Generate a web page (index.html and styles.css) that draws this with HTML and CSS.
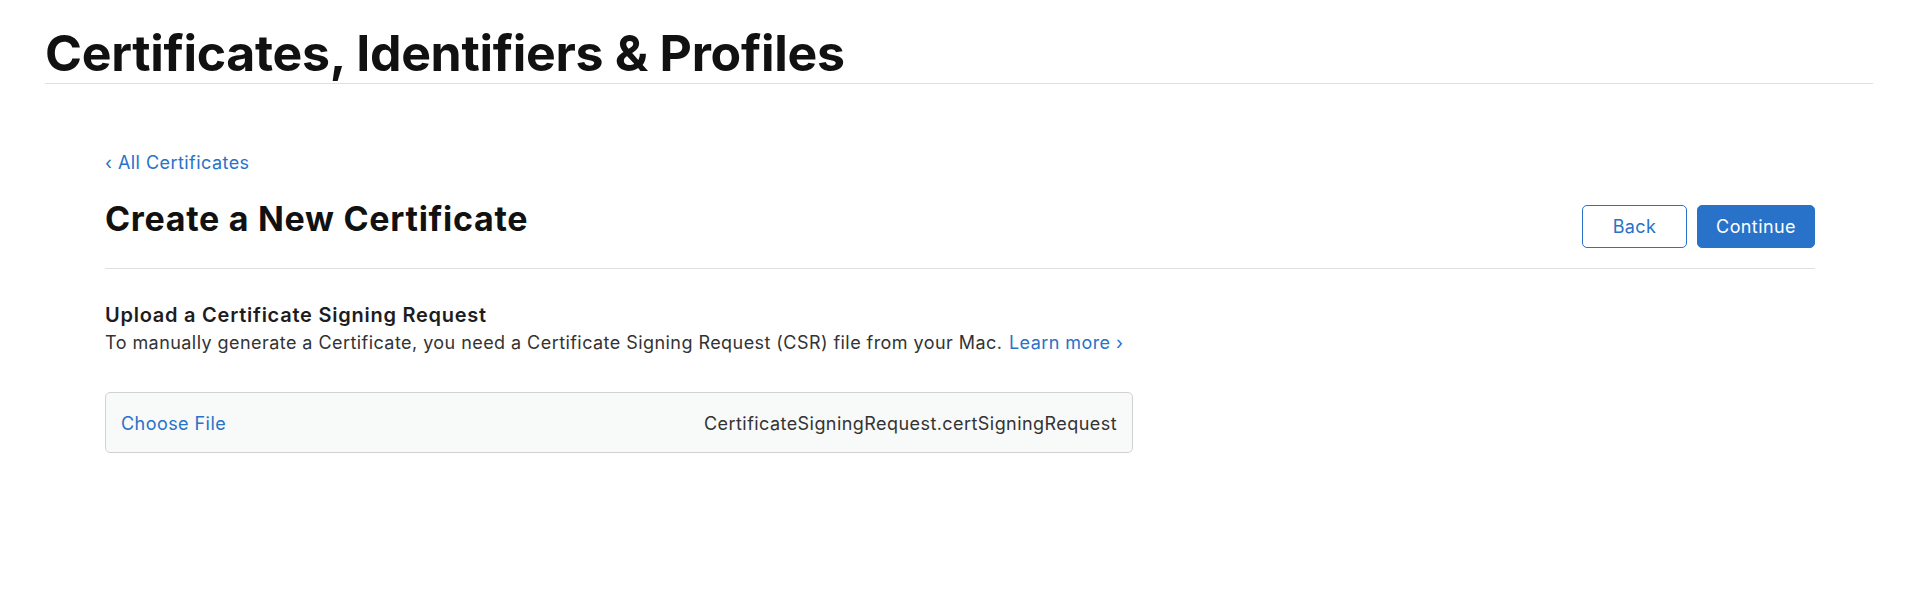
FILE: index.html
```html
<!DOCTYPE html>
<html lang="en">
<head>
<meta charset="utf-8">
<title>Certificates, Identifiers &amp; Profiles</title>
<link rel="stylesheet" href="styles.css">
</head>
<body>
<header class="site-header">
  <h1 class="site-title">Certificates, Identifiers &amp; Profiles</h1>
</header>
<main class="content">
  <a class="back-link" href="#"><span class="chev">‹</span> All Certificates</a>
  <div class="title-row">
    <h2 class="page-title">Create a New Certificate</h2>
    <div class="actions">
      <button class="btn btn-outline">Back</button>
      <button class="btn btn-primary">Continue</button>
    </div>
  </div>
  <section class="section">
    <h3 class="section-title">Upload a Certificate Signing Request</h3>
    <p class="section-text">To manually generate a Certificate, you need a Certificate Signing Request (CSR) file from your Mac. <a class="link" href="#">Learn more ›</a></p>
    <div class="file-box">
      <a class="link choose" href="#">Choose File</a>
      <span class="file-name">CertificateSigningRequest.certSigningRequest</span>
    </div>
  </section>
</main>
</body>
</html>
```
FILE: styles.css
```css
* { box-sizing: border-box; }
html, body {
  margin: 0;
  padding: 0;
  background: #fff;
  font-family: Inter, "Liberation Sans", sans-serif;
  color: #1d1d1f;
}
.site-header {
  margin: 0 47px 0 45px;
  padding-top: 24px;
  border-bottom: 1px solid #e0e0e0;
}
.site-title {
  margin: 0;
  font-size: 50px;
  line-height: 59px;
  font-weight: 700;
  letter-spacing: -0.3px;
  color: #111;
}
.content {
  padding: 67px 105px 0 105px;
}
.back-link {
  display: inline-block;
  font-size: 18px;
  line-height: 24px;
  color: #2872c9;
  text-decoration: none;
  letter-spacing: 0.45px;
}
.title-row {
  display: flex;
  justify-content: space-between;
  align-items: flex-start;
  margin-top: 24px;
  padding-bottom: 20px;
  border-bottom: 1px solid #e0e0e0;
}
.page-title {
  margin: 0;
  font-size: 34px;
  line-height: 40px;
  font-weight: 700;
  letter-spacing: 0.7px;
  color: #111;
}
.actions {
  display: flex;
  gap: 10px;
  margin-top: 6px;
}
.btn {
  height: 43px;
  border-radius: 5px;
  font-family: inherit;
  font-size: 18px;
  letter-spacing: 0.4px;
  border: 1px solid #2872c9;
  cursor: pointer;
}
.btn-outline {
  width: 105px;
  background: #fff;
  color: #2872c9;
}
.btn-primary {
  width: 118px;
  background: #2872c9;
  color: #fff;
}
.section { padding-top: 34px; }
.section-title {
  margin: 0;
  font-size: 20px;
  line-height: 24px;
  font-weight: 600;
  letter-spacing: 0.75px;
  color: #1d1d1f;
}
.section-text {
  margin: 4px 0 0;
  font-size: 18px;
  line-height: 24px;
  color: #333;
  letter-spacing: 0.44px;
}
.link {
  color: #2872c9;
  text-decoration: none;
  margin-left: 1px;
}
.file-box {
  margin-top: 37px;
  width: 1028px;
  height: 61px;
  display: flex;
  justify-content: space-between;
  align-items: center;
  padding: 2px 15px 0;
  background: #f8f9f9;
  border: 1px solid #d2d2d2;
  border-radius: 5px;
  font-size: 18px;
  line-height: 24px;
  letter-spacing: 0.44px;
}
.file-box .choose { margin-left: 0; }
.file-name { color: #333; }
```
